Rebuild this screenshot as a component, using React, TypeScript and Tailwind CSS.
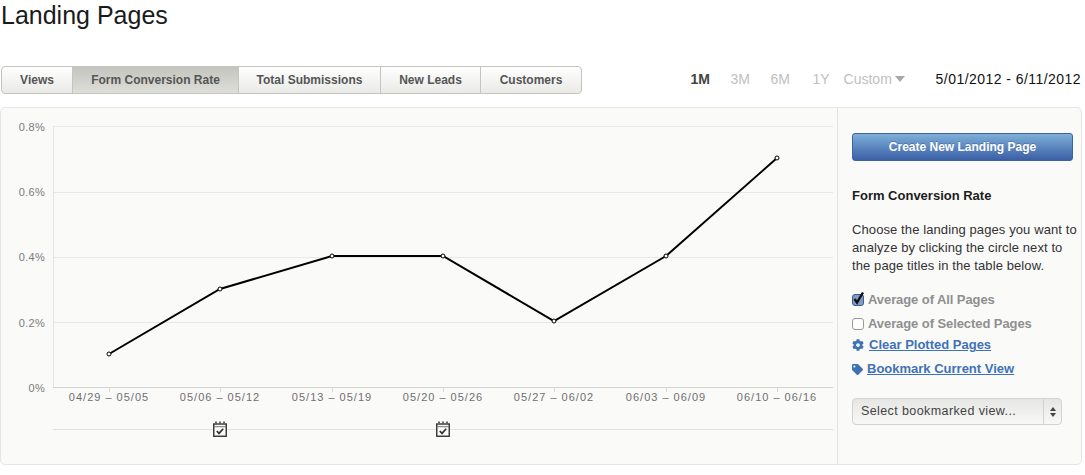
import React from "react";
import { FaCog, FaTag } from "react-icons/fa";

const labels = ["04/29 – 05/05","05/06 – 05/12","05/13 – 05/19","05/20 – 05/26","05/27 – 06/02","06/03 – 06/09","06/10 – 06/16"];
const xs = [109,220,332,443,554,666,777];
const ys = [354,289,256,256,321,256,158];
const grid = [[126,"0.8%",131],[192,"0.6%",195.5],[257,"0.4%",261],[322,"0.2%",326.5],[387,"0%",391.5]] as const;
const tabs = [["Views","w-[70px]"],["Form Conversion Rate","w-[166px]"],["Total Submissions","w-[142px]"],["New Leads","w-[100px]"],["Customers","flex-1"]] as const;

function Note({x}:{x:number}) {
  return (
    <g transform={`translate(${x-7},421)`} fill="none" stroke="#333">
      <rect x="0.75" y="3" width="12.5" height="12.25" fill="#fafaf9" strokeWidth="1.4"/>
      <path d="M3 0.5v3M7 0.5v3M11 0.5v3" strokeWidth="2" stroke="#666"/>
      <path d="M1 5.7h12" strokeWidth="1" stroke="#777"/>
      <path d="M3.8 10l2.2 2.4 4.2-4.6" strokeWidth="1.7"/>
    </g>
  );
}

export default function App() {
  return (
    <div className="w-[1085px] h-[475px] bg-white overflow-hidden font-['Liberation_Sans',Arial,sans-serif]">
      <h1 className="pl-[1px] pt-[1px] h-[66px] text-[25px] leading-[28px] text-[#1a1a1a] font-normal">Landing Pages</h1>
      <div className="flex justify-between items-center w-[1082px] ml-[1px] h-[28px] pr-[2px]">
        <div className="flex w-[581px] h-[28px] rounded-[4px] border border-[#c4c4c0] overflow-hidden text-[12px] font-bold text-[#555] bg-gradient-to-b from-white to-[#e9e9e6]">
          {tabs.map(([t,w],i)=>(
            <div key={t} className={`${w} flex items-center justify-center pb-[1px] ${i>0?"border-l border-[#c4c4c0]":""} ${i===1?"bg-gradient-to-b from-[#c4c4be] to-[#dfdfda]":""}`}>{t}</div>
          ))}
        </div>
        <div className="flex items-center text-[14px] text-[#c0c0c0] h-[28px] pb-[2px]">
          <span className="font-bold text-[#444] w-[40px]">1M</span>
          <span className="w-[40px]">3M</span>
          <span className="w-[42px]">6M</span>
          <span className="w-[31px]">1Y</span>
          <span className="w-[92px] flex items-center gap-[3px]">Custom<span className="w-0 h-0 border-x-[5px] border-x-transparent border-t-[6px] border-t-[#a8a8a8]"></span></span>
          <span className="text-[14px] text-[#111] tracking-[0.45px] whitespace-nowrap">5/01/2012 - 6/11/2012</span>
        </div>
      </div>
      <div className="mt-[13px] w-[1082px] h-[358px] flex rounded-[5px] border border-[#e6e6e4] bg-[#fafaf9] overflow-hidden">
        <div className="w-[837px] shrink-0 border-r border-[#e3e3e1]">
          <svg width="836" height="356" viewBox="1 108 836 356" className="block" fontFamily="'Liberation Sans',Arial,sans-serif">
            {grid.map(([y,l,ty])=>(
              <g key={l}>
                <line x1="53" x2="833" y1={y+0.5} y2={y+0.5} stroke={y===387?"#d2d2d0":"#e8e8e6"}/>
                <text x="45" y={ty} textAnchor="end" fontSize="11" letterSpacing="0.3" fill="#7a7a7a">{l}</text>
              </g>
            ))}
            <line x1="53.5" x2="53.5" y1="126" y2="387" stroke="#e4e4e2"/>
            <line x1="53" x2="833" y1="429.5" y2="429.5" stroke="#e2e2e0"/>
            {labels.map((l,i)=>(
              <g key={l}>
                <line x1={xs[i]+0.5} x2={xs[i]+0.5} y1="387" y2="392" stroke="#d8d8d6"/>
                <text x={xs[i]} y="401" textAnchor="middle" fontSize="11" letterSpacing="1" fill="#6f6f6f">{l}</text>
              </g>
            ))}
            <polyline points={xs.map((x,i)=>`${x},${ys[i]}`).join(" ")} fill="none" stroke="#000" strokeWidth="2"/>
            {xs.map((x,i)=><circle key={x} cx={x} cy={ys[i]} r="2" fill="#fff" stroke="#000" strokeWidth="1"/>)}
            <Note x={220}/>
            <Note x={443}/>
          </svg>
        </div>
        <div className="flex-1 pl-[14px] pt-[25px] min-w-0">
          <div className="w-[221px] h-[28px] rounded-[3px] border border-[#3f62a0] bg-gradient-to-b from-[#7fb0d8] to-[#3c5fa6] flex items-center justify-center text-[12px] font-bold text-white [text-shadow:0_-1px_0_rgba(0,0,0,0.2)]">Create New Landing Page</div>
          <div className="mt-[27px] text-[13px] leading-[16px] font-bold text-[#1c1c1c]">Form Conversion Rate</div>
          <p className="mt-[17px] text-[13px] leading-[18px] text-[#333] tracking-[0.1px] whitespace-nowrap">Choose the landing pages you want to<br/>analyze by clicking the circle next to<br/>the page titles in the table below.</p>
          <div className="mt-[17px] flex items-center h-[16px] text-[13px] font-bold text-[#8f8f8f] tracking-[-0.08px]">
            <span className="relative w-[12px] h-[12px] rounded-[3px] border border-[#3d5a8c] bg-[#7f9cc9] mr-[4px]">
              <svg className="absolute -left-[1px] -top-[4px]" width="13" height="15" viewBox="0 0 13 15"><path d="M2.5 8l2.5 3.5L11 1.5" fill="none" stroke="#111" strokeWidth="2.4"/></svg>
            </span>
            Average of All Pages
          </div>
          <div className="mt-[8px] flex items-center h-[16px] text-[13px] font-bold text-[#8f8f8f] tracking-[-0.08px]">
            <span className="w-[12px] h-[12px] rounded-[3px] border border-[#9a9a9a] bg-white mr-[4px]"></span>
            Average of Selected Pages
          </div>
          <div className="mt-[5px] flex items-center h-[16px] text-[13px] font-bold text-[#3f72b5]">
            <FaCog size={12} className="mr-[5px]"/>
            <span className="underline">Clear Plotted Pages</span>
          </div>
          <div className="mt-[8px] flex items-center h-[16px] text-[13px] font-bold text-[#3f72b5]">
            <FaTag size={11} className="mr-[4px]"/>
            <span className="underline">Bookmark Current View</span>
          </div>
          <div className="mt-[21px] w-[210px] h-[27px] rounded-[4px] border border-[#d2d2d0] flex bg-gradient-to-b from-[#e6e6e4] to-[#f8f8f7] text-[12.5px] text-[#444] tracking-[0.4px]">
            <div className="flex-1 flex items-center pl-[8px]">Select bookmarked view...</div>
            <div className="w-[18px] border-l border-[#d2d2d0] flex flex-col items-center justify-center gap-[2px]">
              <span className="w-0 h-0 border-x-[3px] border-x-transparent border-b-[4px] border-b-[#444]"></span>
              <span className="w-0 h-0 border-x-[3px] border-x-transparent border-t-[4px] border-t-[#444]"></span>
            </div>
          </div>
        </div>
      </div>
    </div>
  );
}
